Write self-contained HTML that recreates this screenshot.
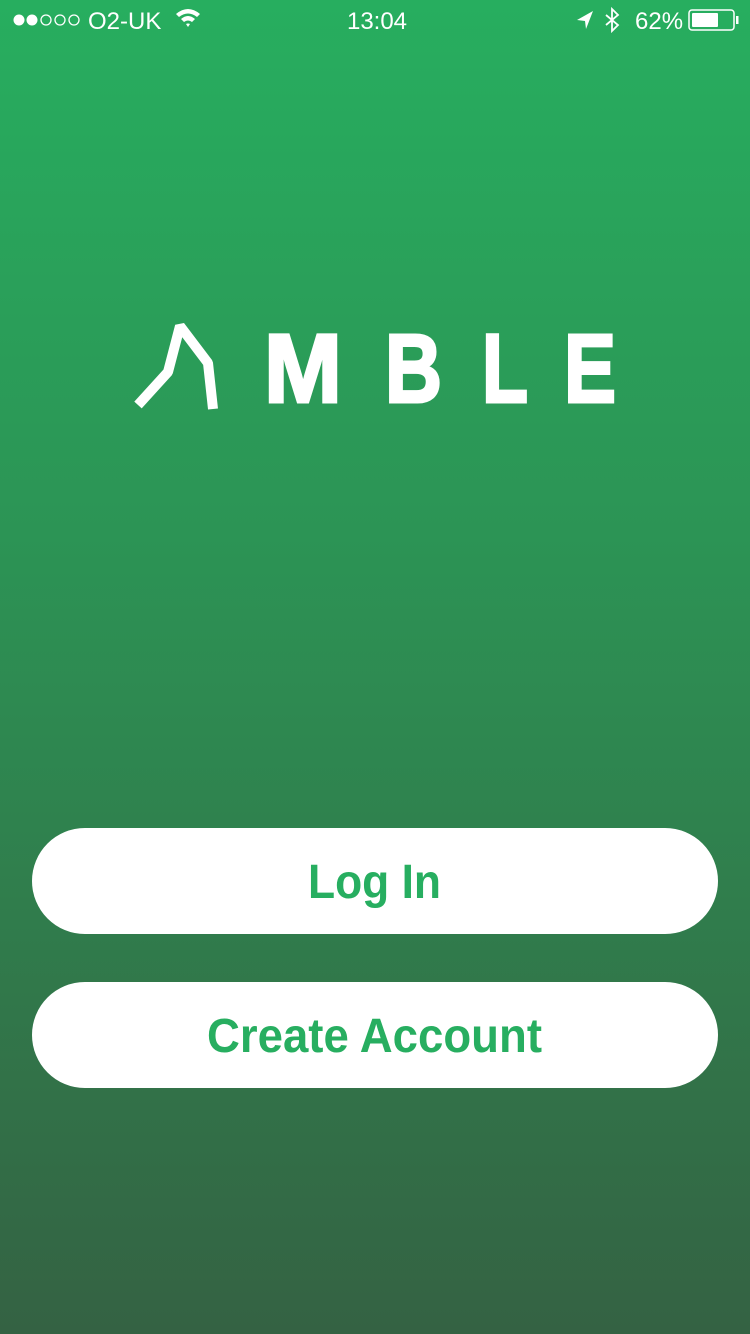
<!DOCTYPE html>
<html><head><meta charset="utf-8"><style>
html,body{margin:0;padding:0}
body{width:750px;height:1334px;overflow:hidden;background:linear-gradient(180deg,#27ae5f 0%,#2c9455 40%,#31774a 75%,#346243 100%);font-family:"Liberation Sans",sans-serif}
svg{position:absolute;left:0;top:0}
</style></head><body>
<svg width="750" height="1334" viewBox="0 0 750 1334">
<g fill="#fff" font-family="Liberation Sans, sans-serif">
<circle cx="19" cy="20" r="5.5"/><circle cx="32" cy="20" r="5.5"/>
<g fill="none" stroke="#fff" stroke-width="1.3"><circle cx="46" cy="20" r="5"/><circle cx="60" cy="20" r="5"/><circle cx="74" cy="20" r="5"/></g>
<text x="88" y="29" font-size="24">O2-UK</text>
<path d="M176 14 Q188 4 200 14 L197 17 Q188 10 179 17Z M181 19 Q188 13 195 19 L192 22 Q188 19 184 22Z M186 24 L188 27 L190 24 Q188 23 186 24Z"/>
<text x="377" y="29" font-size="24" text-anchor="middle">13:04</text>
<path d="M593 11 L577 20 L585 21 L586 29Z"/>
<path d="M606 15 L618 25 L612 31 L612 9 L618 15 L606 25" fill="none" stroke="#fff" stroke-width="1.8"/>
<text x="635" y="29" font-size="24">62%</text>
<rect x="689" y="10" width="45" height="20" rx="3" fill="none" stroke="#fff" stroke-width="1.5"/>
<rect x="692" y="13" width="26" height="14" rx="1"/>
<rect x="736" y="16" width="2.5" height="8"/>
</g>
<path d="M138 405 L168 372 L180 326 L208 363 L213 409" fill="none" stroke="#fff" stroke-width="10" stroke-linejoin="bevel"/>
<g fill="#fff" stroke="#fff" stroke-width="3" font-family="Liberation Sans, sans-serif" font-weight="bold" font-size="97">
<text x="264" y="402" textLength="78" lengthAdjust="spacingAndGlyphs">M</text>
<text x="385" y="402" textLength="57" lengthAdjust="spacingAndGlyphs">B</text>
<text x="482" y="402" textLength="46" lengthAdjust="spacingAndGlyphs">L</text>
<text x="564" y="402" textLength="52" lengthAdjust="spacingAndGlyphs">E</text>
</g>
<rect x="32" y="828" width="686" height="106" rx="53" fill="#fff"/>
<rect x="32" y="982" width="686" height="106" rx="53" fill="#fff"/>
<g fill="#27ae60" font-family="Liberation Sans, sans-serif" font-weight="bold" font-size="48">
<text x="308" y="898" textLength="133" lengthAdjust="spacingAndGlyphs">Log In</text>
<text x="207" y="1052" textLength="335" lengthAdjust="spacingAndGlyphs">Create Account</text>
</g>
</svg>
</body></html>
